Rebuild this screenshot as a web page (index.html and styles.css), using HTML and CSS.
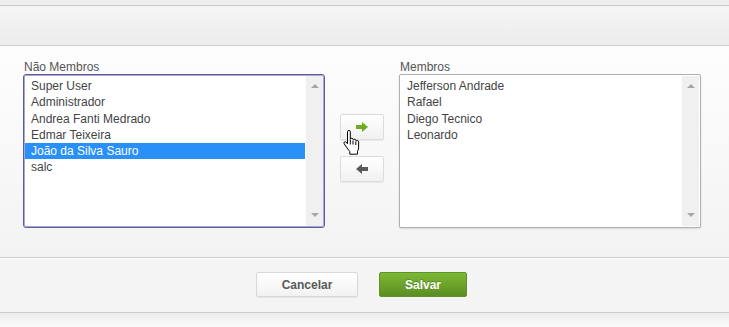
FILE: index.html
```html
<!DOCTYPE html>
<html lang="pt">
<head>
<meta charset="utf-8">
<title>Membros</title>
<link rel="stylesheet" href="styles.css">
</head>
<body>
<div class="page">
  <div class="topstrip"></div>
  <div class="header"></div>
  <div class="content">
    <div class="column">
      <div class="label">Não Membros</div>
      <div class="listbox focused">
        <div class="options">
          <div class="option">Super User</div>
          <div class="option">Administrador</div>
          <div class="option">Andrea Fanti Medrado</div>
          <div class="option">Edmar Teixeira</div>
          <div class="option selected">João da Silva Sauro</div>
          <div class="option">salc</div>
        </div>
        <div class="scrollbar"><span class="tri up"></span><span class="tri down"></span></div>
      </div>
    </div>
    <div class="movers">
      <div class="mover">
        <svg width="12" height="10" viewBox="0 0 12 10"><path d="M0 3h6V0l6 5-6 5V7H0z" fill="#6eaa22"/></svg>
      </div>
      <div class="mover">
        <svg width="12" height="10" viewBox="0 0 12 10"><path d="M12 3H6V0L0 5l6 5V7h6z" fill="#5a5a5a"/></svg>
      </div>
      <svg class="cursor" width="19" height="25" viewBox="0 0 19 25">
        <path d="M5.5 1.8c0-.9.6-1.4 1.4-1.4s1.4.5 1.4 1.4v7.4c.3-.7.9-1 1.5-1 .8 0 1.4.6 1.4 1.3v.5c.3-.6.9-.8 1.4-.8.8 0 1.4.6 1.4 1.3v.6c.3-.4.8-.6 1.3-.6.8 0 1.3.6 1.3 1.3v6c0 1.3-.4 2.4-1.1 3.4v3H7.8v-2.7c-.8-1-2-2.4-2.8-3.6l-2.8-4.1c-.4-.6-.3-1.4.2-1.8.6-.4 1.3-.3 1.8.2l1.3 1.6z" fill="#fff" stroke="#000" stroke-width="1"/>
        <path d="M8.3 9.5v5M11 10.5v4M13.8 11.5v3.5" stroke="#000" stroke-width="1" fill="none"/>
      </svg>
    </div>
    <div class="column">
      <div class="label">Membros</div>
      <div class="listbox">
        <div class="options">
          <div class="option">Jefferson Andrade</div>
          <div class="option">Rafael</div>
          <div class="option">Diego Tecnico</div>
          <div class="option">Leonardo</div>
        </div>
        <div class="scrollbar"><span class="tri up"></span><span class="tri down"></span></div>
      </div>
    </div>
  </div>
  <div class="footer">
    <button class="btn cancel">Cancelar</button>
    <button class="btn save">Salvar</button>
  </div>
  <div class="bottom"></div>
</div>
</body>
</html>
```

FILE: styles.css
```css
html, body {
  margin: 0;
  padding: 0;
  background: #ffffff;
}
body {
  font-family: "Liberation Sans", Arial, sans-serif;
  font-size: 12px;
  color: #444;
}
.page {
  width: 729px;
  height: 327px;
  overflow: hidden;
}
.topstrip {
  height: 5px;
  background: #eeeeee;
}
.header {
  height: 39px;
  border-top: 1px solid #c8c8c8;
  border-bottom: 1px solid #cdcdcd;
  background: linear-gradient(#f5f5f5, #ececec);
}
.content {
  height: 196px;
  padding: 15px 0 0 23px;
  display: flex;
  background: linear-gradient(#fdfdfd, #f8f8f8 55%, #f3f3f3);
}
.column {
  display: flex;
  flex-direction: column;
  width: 302px;
}
.label {
  height: 13px;
  line-height: 13px;
  padding-left: 1px;
  color: #555;
}
.listbox {
  box-sizing: border-box;
  height: 154px;
  display: flex;
  background: #fff;
  border: 1px solid #b0b0b0;
  border-radius: 2px;
  box-shadow: 0 1px 2px rgba(0, 0, 0, 0.12);
}
.listbox.focused {
  border-color: #5c5c9e;
  border-radius: 3px;
  box-shadow: inset 0 0 0 1px #a8a8d2;
}
.options {
  flex: 1;
  padding: 3px 1px 0 1px;
}
.option {
  height: 16.3px;
  line-height: 16.3px;
  padding-left: 6px;
  color: #444;
  white-space: nowrap;
}
.option.selected {
  background: #2990f8;
  color: #fff;
}
.scrollbar {
  width: 17px;
  background: #f0f0f0;
  display: flex;
  flex-direction: column;
  justify-content: space-between;
  align-items: center;
  padding: 8px 0 9px;
  margin: 1px 1px 1px 0;
}
.tri {
  width: 0;
  height: 0;
  border-left: 4px solid transparent;
  border-right: 4px solid transparent;
}
.tri.up {
  border-bottom: 4px solid #a6a6a6;
}
.tri.down {
  border-top: 4px solid #a6a6a6;
}
.movers {
  position: relative;
  width: 44px;
  margin: 53px 15px 0;
  display: flex;
  flex-direction: column;
  gap: 16px;
}
.mover {
  box-sizing: border-box;
  height: 26px;
  display: flex;
  align-items: center;
  justify-content: center;
  background: linear-gradient(#ffffff, #f1f1f1);
  border: 1px solid #dcdcdc;
  border-radius: 2px;
  box-shadow: 0 1px 1px rgba(0, 0, 0, 0.06);
}
.cursor {
  position: absolute;
  left: 2px;
  top: 16px;
}
.footer {
  box-sizing: border-box;
  height: 56px;
  border-top: 1px solid #cccccc;
  border-bottom: 1px solid #cccccc;
  background: #f4f4f4;
  box-shadow: inset 0 1px 0 #ffffff;
  display: flex;
  justify-content: center;
  align-items: flex-start;
  gap: 21px;
  padding: 14px 6px 0 0;
}
.btn {
  height: 25px;
  box-sizing: border-box;
  font-family: "Liberation Sans", Arial, sans-serif;
  font-size: 12px;
  font-weight: bold;
  border-radius: 2px;
  padding: 0;
  cursor: pointer;
}
.cancel {
  width: 102px;
  color: #5a5a5a;
  background: linear-gradient(#ffffff, #f2f2f2);
  border: 1px solid #d8d8d8;
  box-shadow: 0 1px 1px rgba(0, 0, 0, 0.06);
}
.save {
  width: 88px;
  color: #ffffff;
  background: linear-gradient(#7db834, #5a8e22);
  border: 1px solid #5f9228;
  text-shadow: 0 -1px 0 rgba(0, 0, 0, 0.2);
}
.bottom {
  height: 14px;
  background: linear-gradient(#ececec, #fafafa);
}
```
